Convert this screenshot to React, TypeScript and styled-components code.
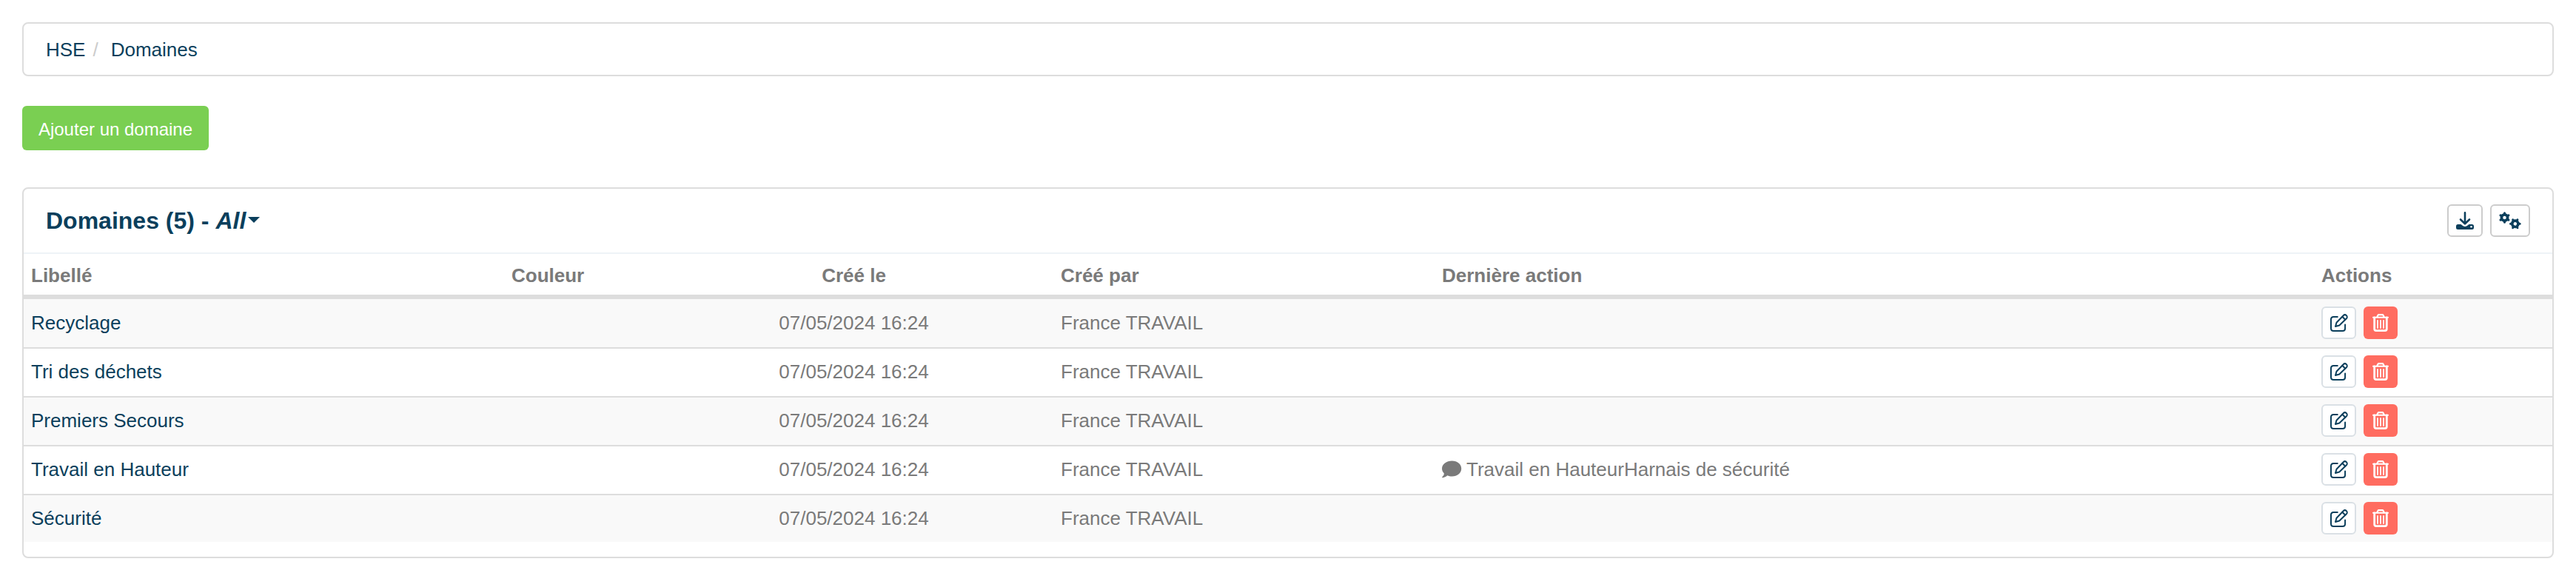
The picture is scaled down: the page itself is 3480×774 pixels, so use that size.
import React from "react";
import styled, { createGlobalStyle } from "styled-components";

const GlobalStyle = createGlobalStyle`
  * {
    box-sizing: border-box;
  }

  body {
    margin: 0;
    background: #fff;
    color: #7a7a7a;
    font-family: "Liberation Sans", Arial, sans-serif;
    font-size: 26px;
    line-height: 30px;
  }
`;

const Page = styled.main`
  display: flex;
  flex-direction: column;
  align-items: flex-start;
  padding: 30px;
`;

const Breadcrumb = styled.nav`
  display: flex;
  align-items: center;
  width: 100%;
  height: 73px;
  margin-bottom: 40px;
  padding: 0 30px;
  border: 2px solid #ddd;
  border-radius: 8px;
`;

const Link = styled.a`
  color: #0b3f5c;
  text-decoration: none;
`;

const Separator = styled.span`
  padding: 0 17px 0 10px;
  color: #ccc;
`;

const AddButton = styled.button`
  width: 252px;
  height: 60px;
  margin-bottom: 50px;
  padding: 4px 0 0;
  border: 0;
  border-radius: 6px;
  background: #7acf52;
  color: #fff;
  font-family: inherit;
  font-size: 24px;
  white-space: nowrap;
`;

const Panel = styled.section`
  width: 100%;
  height: 501px;
  border: 2px solid #ddd;
  border-radius: 8px;
`;

const PanelHeader = styled.header`
  display: flex;
  align-items: center;
  justify-content: space-between;
  height: 88px;
  padding: 0 30px;
  border-bottom: 2px solid #eef3f7;
`;

const Title = styled.h2`
  display: flex;
  align-items: center;
  margin: 0;
  color: #0b3f5c;
  font-size: 32px;
  line-height: 36px;
  white-space: pre;
`;

const Caret = styled.span`
  margin: 0 0 3px 3px;
  border: 8px solid transparent;
  border-top-color: currentColor;
  border-bottom: 0;
`;

const ButtonGroup = styled.div`
  display: flex;
  gap: 10px;
`;

const IconButton = styled.button<{ $variant?: "tool" | "edit" | "delete"; $width: number }>`
  display: flex;
  align-items: center;
  justify-content: center;
  width: ${({ $width }) => $width}px;
  height: 44px;
  padding: 0;
  border: ${({ $variant }) =>
    $variant === "delete" ? "0" : $variant === "edit" ? "2px solid #dae0e5" : "2px solid #ccc"};
  border-radius: 6px;
  background: ${({ $variant }) => ($variant === "delete" ? "#ff6c60" : "#fff")};
  color: ${({ $variant }) => ($variant === "delete" ? "#fff" : "#0b3f5c")};
`;

const Table = styled.table`
  width: 3416px;
  table-layout: fixed;
  border-collapse: separate;
  border-spacing: 0;
`;

const Col = styled.col<{ $width: number }>`
  width: ${({ $width }) => $width}px;
`;

const HeadCell = styled.th<{ $center?: boolean }>`
  height: 59px;
  padding: 2px 10px 0;
  border-bottom: 4px solid #ddd;
  text-align: ${({ $center }) => ($center ? "center" : "left")};
`;

const Cell = styled.td<{ $center?: boolean }>`
  padding: 9px 10px 0;
  border-top: 2px solid #ddd;
  line-height: 44px;
  text-align: ${({ $center }) => ($center ? "center" : "left")};
  vertical-align: top;
  white-space: nowrap;
`;

const Row = styled.tr`
  height: 66px;

  &:first-child {
    height: 67px;
  }

  &:first-child ${Cell} {
    padding-top: 10px;
  }

  &:last-child {
    height: 65px;
  }

  &:nth-child(odd) {
    background: #f9f9f9;
  }
`;

const LastAction = styled.div`
  display: flex;
  align-items: center;
  gap: 6px;
`;

const DownloadIcon = () => (
  <svg width="24" height="24" viewBox="0 0 24 24" fill="none">
    <path
      d="M2.5 17H6.5L9.5 19.2Q12 20.8 14.5 19.2L17.5 17H21.5Q24 17 24 19.5V21.5Q24 24 21.5 24H2.5Q0 24 0 21.5V19.5Q0 17 2.5 17Z"
      fill="currentColor"
    />
    <path
      d="M12 1.3V15.5M6 10.5L12 16.3L18 10.5"
      stroke="currentColor"
      strokeWidth="2.6"
      strokeLinecap="round"
      strokeLinejoin="round"
    />
    <circle cx="20.5" cy="20.3" r="1.3" fill="#fff" />
  </svg>
);

const Gear = ({ x, y, angle }: { x: number; y: number; angle: number }) => (
  <g transform={`translate(${x} ${y}) rotate(${angle})`} stroke="currentColor" fill="none">
    <circle r="4.1" strokeWidth="3.7" />
    {[0, 60, 120, 180, 240, 300].map((a) => (
      <path
        key={a}
        d="M0 -5.2V-6.3"
        strokeWidth="3"
        strokeLinecap="round"
        transform={`rotate(${a})`}
      />
    ))}
  </g>
);

const GearsIcon = () => (
  <svg width="30" height="24" viewBox="0 0 30 24">
    <Gear x={7.5} y={8} angle={0} />
    <Gear x={21.8} y={16.3} angle={30} />
  </svg>
);

const EditIcon = () => (
  <svg
    width="24"
    height="24"
    viewBox="0 0 24 24"
    fill="none"
    stroke="currentColor"
    strokeWidth="2"
    strokeLinecap="round"
    strokeLinejoin="round"
  >
    <path d="M9.8 3.9H4.5Q1 3.9 1 7.4V19.5Q1 23 4.5 23H16.6Q20.1 23 20.1 19.5V14.6" />
    <path d="M7 17L8.5 11.8L17.7 2.2A2.9 2.9 0 0 1 21.9 6.3L12.3 15.5Z" />
    <path d="M16.3 3.8L20.3 7.8" />
  </svg>
);

const TrashIcon = () => (
  <svg
    width="22"
    height="24"
    viewBox="0 0 22 24"
    fill="none"
    stroke="currentColor"
    strokeLinecap="round"
    strokeLinejoin="round"
  >
    <path d="M1 4.8H21" strokeWidth="2" />
    <path d="M6.2 4.3L7.4 1.9Q7.8 1.1 8.6 1.1H13.4Q14.2 1.1 14.6 1.9L15.8 4.3" strokeWidth="2.2" />
    <path d="M2.7 5V20.3Q2.7 22.6 5 22.6H17Q19.3 22.6 19.3 20.3V5" strokeWidth="2.8" />
    <path d="M7 9V19M11 9V19M15 9V19" strokeWidth="1.8" />
  </svg>
);

const CommentIcon = () => (
  <svg width="27" height="24" viewBox="0 0 27 24" fill="currentColor">
    <path d="M13.5 0.5C20.7 0.5 26.2 5.1 26.2 11S20.7 21.5 13.5 21.5C11.2 21.5 9.1 21.1 7.3 20.2C5.4 21.8 3 23.2 0.5 23.2C-0.1 23.2 0 22.6 0.3 22.3C1.7 21 2.7 19.3 2.9 17.4C1.1 15.6 0 13.4 0 11C0 5.1 6.3 0.5 13.5 0.5Z" />
  </svg>
);

type Domain = {
  label: string;
  createdAt: string;
  createdBy: string;
  lastAction?: string;
};

const createdAt = "07/05/2024 16:24";
const createdBy = "France TRAVAIL";

const domains: Domain[] = [
  { label: "Recyclage", createdAt, createdBy },
  { label: "Tri des déchets", createdAt, createdBy },
  { label: "Premiers Secours", createdAt, createdBy },
  {
    label: "Travail en Hauteur",
    createdAt,
    createdBy,
    lastAction: "Travail en HauteurHarnais de sécurité",
  },
  { label: "Sécurité", createdAt, createdBy },
];

const columnWidths = [649, 203, 539, 515, 1188, 322];

const DomainRow = ({ domain }: { domain: Domain }) => (
  <Row>
    <Cell>
      <Link>{domain.label}</Link>
    </Cell>
    <Cell />
    <Cell $center>{domain.createdAt}</Cell>
    <Cell>{domain.createdBy}</Cell>
    <Cell>
      {domain.lastAction && (
        <LastAction>
          <CommentIcon />
          {domain.lastAction}
        </LastAction>
      )}
    </Cell>
    <Cell>
      <ButtonGroup>
        <IconButton $variant="edit" $width={47} aria-label="Modifier">
          <EditIcon />
        </IconButton>
        <IconButton $variant="delete" $width={46} aria-label="Supprimer">
          <TrashIcon />
        </IconButton>
      </ButtonGroup>
    </Cell>
  </Row>
);

const App = () => (
  <>
    <GlobalStyle />
    <Page>
      <Breadcrumb>
        <Link>HSE</Link>
        <Separator>/</Separator>
        <Link>Domaines</Link>
      </Breadcrumb>
      <AddButton>Ajouter un domaine</AddButton>
      <Panel>
        <PanelHeader>
          <Title>
            <span>
              Domaines (5) - <em>All</em>
            </span>
            <Caret />
          </Title>
          <ButtonGroup>
            <IconButton $width={48} aria-label="Exporter">
              <DownloadIcon />
            </IconButton>
            <IconButton $width={54} aria-label="Options">
              <GearsIcon />
            </IconButton>
          </ButtonGroup>
        </PanelHeader>
        <Table>
          <colgroup>
            {columnWidths.map((width, i) => (
              <Col key={i} $width={width} />
            ))}
          </colgroup>
          <thead>
            <tr>
              <HeadCell>Libellé</HeadCell>
              <HeadCell>Couleur</HeadCell>
              <HeadCell $center>Créé le</HeadCell>
              <HeadCell>Créé par</HeadCell>
              <HeadCell>Dernière action</HeadCell>
              <HeadCell>Actions</HeadCell>
            </tr>
          </thead>
          <tbody>
            {domains.map((domain) => (
              <DomainRow key={domain.label} domain={domain} />
            ))}
          </tbody>
        </Table>
      </Panel>
    </Page>
  </>
);

export default App;
